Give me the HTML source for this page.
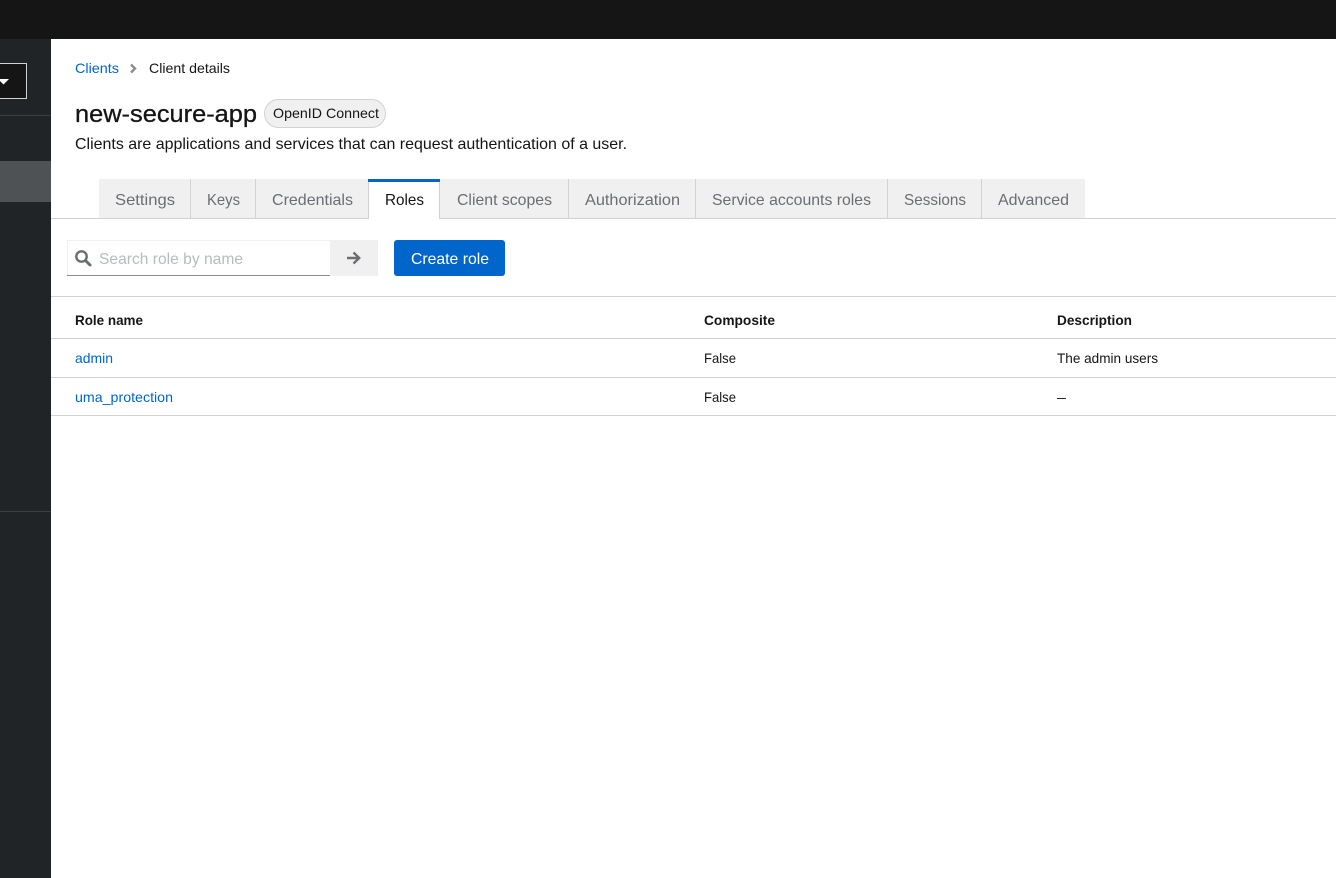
<!DOCTYPE html>
<html lang="en">
<head>
<meta charset="utf-8">
<title>Client details</title>
<style>
html,body{margin:0;padding:0;background:#fff;width:1336px;height:878px;overflow:hidden}
svg{display:block}
text{font-family:"Liberation Sans",sans-serif;font-size:14px;fill:#151515}
.tab{font-size:16px;fill:#6a6e73}
.link{fill:#06c}
.b{font-weight:bold}
</style>
</head>
<body>
<svg width="1336" height="878" viewBox="0 0 1336 878" xmlns="http://www.w3.org/2000/svg">
<!-- header and sidebar -->
<rect x="0" y="0" width="1336" height="39" fill="#151515"/>
<rect x="0" y="39" width="51" height="839" fill="#212427"/>
<rect x="-2" y="63.5" width="28.5" height="35" fill="#151515" stroke="#d2d2d2" stroke-width="1"/>
<path d="M-2 79h11l-5.500 5.500z" fill="#fff"/>
<rect x="0" y="115" width="51" height="1" fill="#3c3f42"/>
<rect x="0" y="161" width="51" height="41" fill="#4f5255"/>
<rect x="0" y="511" width="51" height="1" fill="#3c3f42"/>

<!-- breadcrumb -->
<text x="75" y="73" class="link" textLength="44" lengthAdjust="spacingAndGlyphs">Clients</text>
<path d="M131 64.500l4 4-4 4" fill="none" stroke="#8a8d90" stroke-width="2.400"/>
<text x="149" y="73" textLength="81" lengthAdjust="spacingAndGlyphs">Client details</text>

<!-- title -->
<text x="75" y="122" style="font-size:24px;stroke:#151515;stroke-width:.3px" textLength="182" lengthAdjust="spacingAndGlyphs">new-secure-app</text>
<rect x="264.500" y="99.500" width="121" height="28" rx="14" fill="#f0f0f0" stroke="#d2d2d2"/>
<text x="273" y="118" textLength="106" lengthAdjust="spacingAndGlyphs">OpenID Connect</text>
<text x="75" y="149" style="font-size:16px" textLength="552" lengthAdjust="spacingAndGlyphs">Clients are applications and services that can request authentication of a user.</text>

<!-- tabs -->
<rect x="51" y="218" width="1285" height="1" fill="#d2d2d2"/>
<rect x="99" y="179" width="986" height="39" fill="#f0f0f0"/>
<g fill="#d2d2d2">
<rect x="190" y="179" width="1" height="39"/>
<rect x="255" y="179" width="1" height="39"/>
<rect x="368" y="179" width="1" height="39"/>
<rect x="439" y="179" width="1" height="39"/>
<rect x="568" y="179" width="1" height="39"/>
<rect x="695" y="179" width="1" height="39"/>
<rect x="887" y="179" width="1" height="39"/>
<rect x="981" y="179" width="1" height="39"/>
</g>
<rect x="369" y="182" width="70" height="37" fill="#fff"/>
<rect x="368" y="179" width="72" height="3" fill="#06c"/>
<text x="115" y="205" class="tab" textLength="60" lengthAdjust="spacingAndGlyphs">Settings</text>
<text x="207" y="205" class="tab" textLength="33" lengthAdjust="spacingAndGlyphs">Keys</text>
<text x="272" y="205" class="tab" textLength="81" lengthAdjust="spacingAndGlyphs">Credentials</text>
<text x="385" y="205" style="font-size:16px" textLength="39" lengthAdjust="spacingAndGlyphs">Roles</text>
<text x="457" y="205" class="tab" textLength="95" lengthAdjust="spacingAndGlyphs">Client scopes</text>
<text x="585" y="205" class="tab" textLength="95" lengthAdjust="spacingAndGlyphs">Authorization</text>
<text x="712" y="205" class="tab" textLength="159" lengthAdjust="spacingAndGlyphs">Service accounts roles</text>
<text x="904" y="205" class="tab" textLength="62" lengthAdjust="spacingAndGlyphs">Sessions</text>
<text x="998" y="205" class="tab" textLength="71" lengthAdjust="spacingAndGlyphs">Advanced</text>

<!-- toolbar -->
<rect x="67.500" y="240.500" width="263" height="35" fill="#fff" stroke="#f0f0f0"/>
<rect x="67" y="275" width="263" height="1" fill="#8a8d90"/>
<circle cx="81.500" cy="256.500" r="5.200" fill="none" stroke="#6a6e73" stroke-width="2.400"/>
<path d="M85.500 260.500l4.500 4.500" stroke="#6a6e73" stroke-width="3" stroke-linecap="round"/>
<text x="99" y="264" style="font-size:16px;fill:#b8bbbe" textLength="144" lengthAdjust="spacingAndGlyphs">Search role by name</text>
<rect x="330" y="240" width="48" height="36" fill="#f0f0f0"/>
<path d="M347 258h12.500M353.500 252.500l5.700 5.500-5.700 5.500" fill="none" stroke="#6a6e73" stroke-width="2.400"/>
<rect x="394" y="240" width="111" height="36" rx="3" fill="#06c"/>
<text x="411" y="264" style="font-size:16px;fill:#fff" textLength="78" lengthAdjust="spacingAndGlyphs">Create role</text>

<!-- table -->
<g fill="#d2d2d2">
<rect x="51" y="296" width="1285" height="1"/>
<rect x="51" y="338" width="1285" height="1"/>
<rect x="51" y="377" width="1285" height="1"/>
<rect x="51" y="415" width="1285" height="1"/>
</g>
<text x="75" y="325" class="b" textLength="68" lengthAdjust="spacingAndGlyphs">Role name</text>
<text x="704" y="325" class="b" textLength="71" lengthAdjust="spacingAndGlyphs">Composite</text>
<text x="1057" y="325" class="b" textLength="75" lengthAdjust="spacingAndGlyphs">Description</text>
<text x="75" y="363" class="link" textLength="38" lengthAdjust="spacingAndGlyphs">admin</text>
<text x="704" y="363" textLength="32" lengthAdjust="spacingAndGlyphs">False</text>
<text x="1057" y="363" textLength="101" lengthAdjust="spacingAndGlyphs">The admin users</text>
<text x="75" y="402" class="link" textLength="98" lengthAdjust="spacingAndGlyphs">uma_protection</text>
<text x="704" y="402" textLength="32" lengthAdjust="spacingAndGlyphs">False</text>
<text x="1057" y="402" textLength="9" lengthAdjust="spacingAndGlyphs">–</text>
</svg>
</body>
</html>
